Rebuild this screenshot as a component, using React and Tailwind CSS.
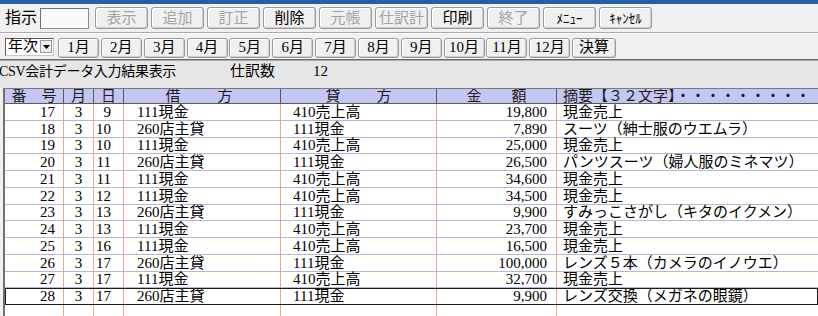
import React from "react";

const rows = [
  ["17", "3", "9", "111現金", "410売上高", "19,800", "現金売上"],
  ["18", "3", "10", "260店主貸", "111現金", "7,890", "スーツ（紳士服のウエムラ）"],
  ["19", "3", "10", "111現金", "410売上高", "25,000", "現金売上"],
  ["20", "3", "11", "260店主貸", "111現金", "26,500", "パンツスーツ（婦人服のミネマツ）"],
  ["21", "3", "11", "111現金", "410売上高", "34,600", "現金売上"],
  ["22", "3", "12", "111現金", "410売上高", "34,500", "現金売上"],
  ["23", "3", "13", "260店主貸", "111現金", "9,900", "すみっこさがし（キタのイクメン）"],
  ["24", "3", "13", "111現金", "410売上高", "23,700", "現金売上"],
  ["25", "3", "16", "111現金", "410売上高", "16,500", "現金売上"],
  ["26", "3", "17", "260店主貸", "111現金", "100,000", "レンズ５本（カメラのイノウエ）"],
  ["27", "3", "17", "111現金", "410売上高", "32,700", "現金売上"],
  ["28", "3", "17", "260店主貸", "111現金", "9,900", "レンズ交換（メガネの眼鏡）"],
];

const tools = [
  { label: "表示", off: true },
  { label: "追加", off: true },
  { label: "訂正", off: true },
  { label: "削除" },
  { label: "元帳", off: true },
  { label: "仕訳計", off: true },
  { label: "印刷" },
  { label: "終了", off: true },
  { label: "ﾒﾆｭｰ", small: true },
  { label: "ｷｬﾝｾﾙ", small: true },
];

const months = ["1月", "2月", "3月", "4月", "5月", "6月", "7月", "8月", "9月", "10月", "11月", "12月"];

const btn =
  "flex items-center justify-center rounded-[3px] border border-[#9a9a9a] bg-[#f0f0f0] shadow-[inset_1px_1px_0_#ffffff,inset_-1px_-1px_0_#cfcfcf] leading-none";

// column cells: data dividers are salmon, header dividers dark
const cols = [
  "w-[59px] justify-end pr-[8px]",
  "w-[30px] justify-center",
  "w-[30px] justify-end pr-[12px]",
  "w-[157px] justify-start pl-[13px]",
  "w-[156px] justify-start pl-[12px]",
  "w-[120px] justify-end pr-[9px]",
  "flex-1 justify-start pl-[6px]",
];

function Row({ r, selected }) {
  return (
    <div
      className={`flex h-[16.75px] border-b border-[#b2b8d8] ${
        selected ? "outline outline-1 outline-[#1a1a1a] -outline-offset-1" : ""
      }`}
    >
      {cols.map((c, i) => (
        <div
          key={i}
          className={`flex items-end leading-none whitespace-nowrap shrink-0 ${c} ${
            i < 6 ? "border-r border-[#f2a58c]" : ""
          }`}
        >
          {r ? r[i] : ""}
        </div>
      ))}
    </div>
  );
}

export default function App() {
  return (
    <div className="w-[818px] h-[316px] overflow-hidden bg-[#f0f0f0] text-black font-['Liberation_Serif','Noto_Sans_CJK_JP',serif]">
      <div className="h-[4px] bg-[#2460a6]" />

      {/* toolbar 1 */}
      <div className="h-[28px] flex items-center pl-[5px]">
        <span className="text-[16px] leading-none">指示</span>
        <div className="ml-[3px] w-[49px] h-[21px] bg-[#fafafa] border border-[#8c8c8c] border-t-[#6e6e6e] border-l-[#6e6e6e]" />
        <div className="ml-[6px] flex gap-[3px]">
          {tools.map((t) => (
            <div
              key={t.label}
              className={`${btn} w-[53px] h-[22px] ${t.small ? "text-[13px]" : "text-[15px]"} ${
                t.off ? "text-[#a3a3a3]" : "text-black"
              }`}
            >
              {t.label}
            </div>
          ))}
        </div>
      </div>
      <div className="border-t border-[#aaaaaa] border-b border-b-white" />

      {/* toolbar 2 */}
      <div className="h-[25px] flex items-center pl-[5px]">
        <div className="w-[49px] h-[18px] bg-white border border-[#5a5a5a] border-b-[#c8c8c8] border-r-[#c8c8c8] flex items-center">
          <span className="pl-[2px] text-[15px] leading-none flex-1">年次</span>
          <div className="w-[12px] h-[13px] mr-[1px] bg-[#ececec] border border-[#9a9a9a] flex items-center justify-center">
            <svg width="7" height="4" viewBox="0 0 7 4">
              <polygon points="0,0 7,0 3.5,4" fill="#000" />
            </svg>
          </div>
        </div>
        <div className="ml-[4px] flex gap-[1.85px] mt-[2px]">
          {months.map((m) => (
            <div key={m} className={`${btn} w-[41px] h-[20px] text-[15px]`}>
              {m}
            </div>
          ))}
          <div className={`${btn} w-[44px] h-[20px] text-[15px]`}>決算</div>
        </div>
      </div>
      <div className="border-t border-[#6a6a6a] border-b border-b-[#a8a8a8]" />

      {/* info line */}
      <div className="h-[27px] bg-[#e6e6e6] flex items-start pt-[2px] text-[14px] leading-[17px] whitespace-nowrap">
        <span className="w-[230px] -ml-[1px] tracking-[-0.3px]">CSV会計データ入力結果表示</span>
        <span className="w-[83px] ml-[1px] text-[15px]">仕訳数</span>
        <span className="text-[15px]">12</span>
      </div>

      {/* grid */}
      <div className="ml-[3px] h-[228px] bg-white border-l-2 border-l-[#707070] border-t border-t-[#7a7a7a] text-[15px] overflow-hidden">
        <div className="flex h-[15px] bg-[#c6c6f4] border-b border-[#5a5a5a] text-[#1c1c1c] leading-none">
          <div className="w-[59px] border-r border-[#5a5a5a] flex justify-center gap-[15px]">
            <span>番</span>
            <span>号</span>
          </div>
          <div className="w-[30px] border-r border-[#5a5a5a] flex justify-center">月</div>
          <div className="w-[30px] border-r border-[#5a5a5a] flex justify-center">日</div>
          <div className="w-[157px] border-r border-[#5a5a5a] flex justify-center gap-[37px] pr-[6px]">
            <span>借</span>
            <span>方</span>
          </div>
          <div className="w-[156px] border-r border-[#5a5a5a] flex justify-center gap-[36px]">
            <span>貸</span>
            <span>方</span>
          </div>
          <div className="w-[120px] border-r border-[#5a5a5a] flex justify-center gap-[30px]">
            <span>金</span>
            <span>額</span>
          </div>
          <div className="flex-1 pl-[6px] whitespace-nowrap overflow-hidden">
            摘要【３２文字】・・・・・・・・・
          </div>
        </div>
        {rows.map((r, i) => (
          <Row key={r[0]} r={r} selected={i === rows.length - 1} />
        ))}
        <Row />
      </div>
    </div>
  );
}
